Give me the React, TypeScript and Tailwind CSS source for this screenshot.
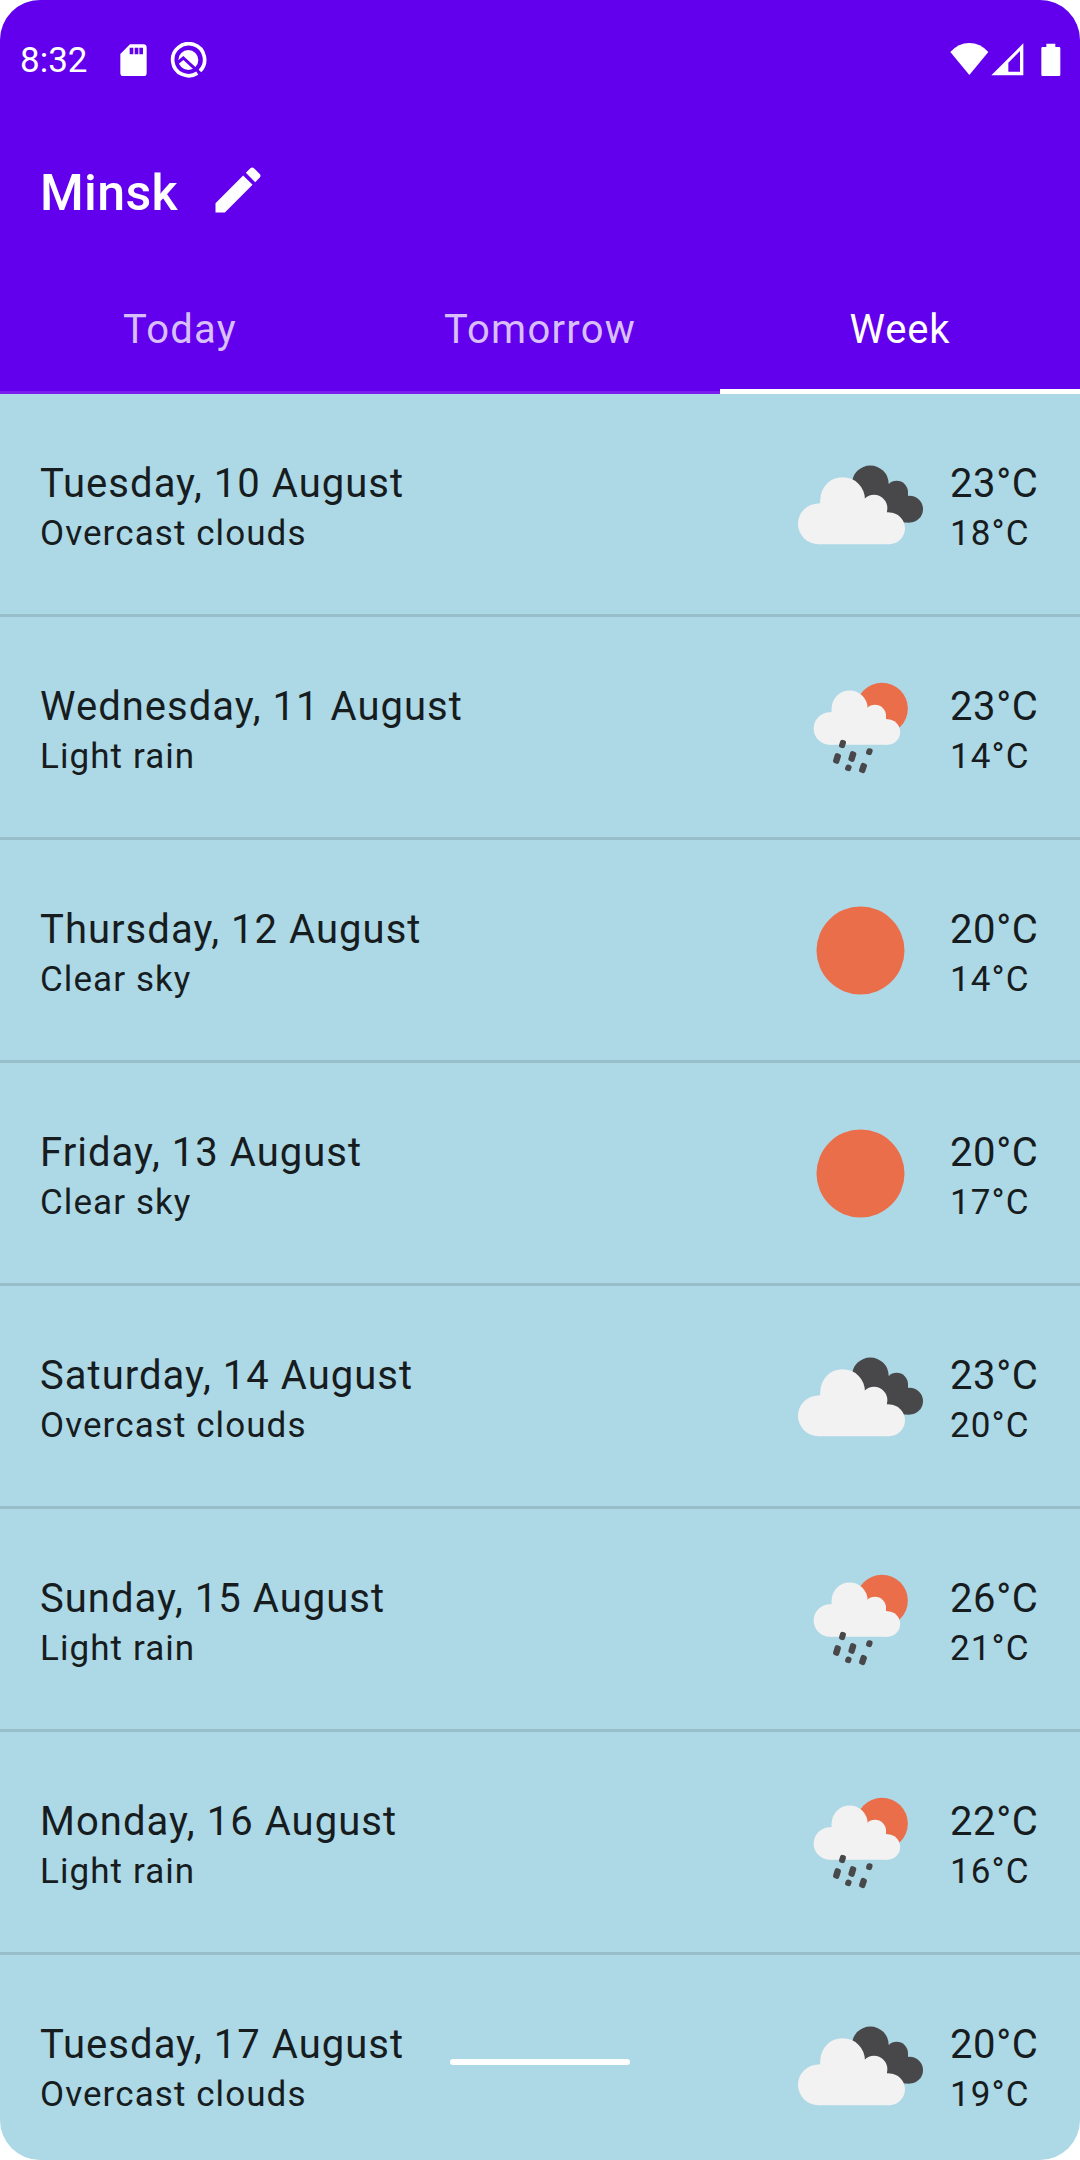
type Weather = 'clouds' | 'rain' | 'sun';

const days: { date: string; text: string; icon: Weather; hi: string; lo: string }[] = [
  { date: 'Tuesday, 10 August', text: 'Overcast clouds', icon: 'clouds', hi: '23°C', lo: '18°C' },
  { date: 'Wednesday, 11 August', text: 'Light rain', icon: 'rain', hi: '23°C', lo: '14°C' },
  { date: 'Thursday, 12 August', text: 'Clear sky', icon: 'sun', hi: '20°C', lo: '14°C' },
  { date: 'Friday, 13 August', text: 'Clear sky', icon: 'sun', hi: '20°C', lo: '17°C' },
  { date: 'Saturday, 14 August', text: 'Overcast clouds', icon: 'clouds', hi: '23°C', lo: '20°C' },
  { date: 'Sunday, 15 August', text: 'Light rain', icon: 'rain', hi: '26°C', lo: '21°C' },
  { date: 'Monday, 16 August', text: 'Light rain', icon: 'rain', hi: '22°C', lo: '16°C' },
  { date: 'Tuesday, 17 August', text: 'Overcast clouds', icon: 'clouds', hi: '20°C', lo: '19°C' },
];

function WeatherIcon({ kind }: { kind: Weather }) {
  if (kind === 'sun') {
    return (
      <svg viewBox="0 0 125 125" className="size-[125px]">
        <circle cx="62.5" cy="62.5" r="44" fill="#EB6E4B" />
      </svg>
    );
  }
  if (kind === 'rain') {
    return (
      <svg viewBox="54 14.5 375 375" className="size-[125px]">
        <circle cx="306" cy="145" r="77.5" fill="#EB6E4B" />
        <g fill="#F2F2F2">
          <circle cx="150" cy="205" r="49" />
          <circle cx="209" cy="145" r="54" />
          <circle cx="285" cy="167" r="33" />
          <circle cx="322" cy="215.5" r="38.5" />
          <path d="M150 156H155V145H262L285 167H318V177H322V254H150Z" />
        </g>
        <g stroke="#48484A" strokeWidth="14" strokeLinejoin="round" fill="#48484A">
          <path d="M187 246l4 1-3 10-4-1zM171 286l5 2-5 16-5-2zM217 280l5 2-5 16-5-2zM267 271l4 1-2 6-4-1zM204 320l4 1-2 5-4-1zM249 315l5 2-5 15-5-2z" />
        </g>
      </svg>
    );
  }
  return (
    <svg viewBox="54 4.5 375 375" className="size-[125px]">
      <g fill="#48484A">
        <circle cx="271" cy="130" r="55" />
        <circle cx="350" cy="155" r="34" />
        <circle cx="389" cy="206" r="40" />
        <path d="M271 130H326L350 155H384V167L389 206V246H300Z" />
      </g>
      <g fill="#F2F2F2">
        <circle cx="115" cy="250" r="61" />
        <circle cx="188" cy="177" r="67" />
        <circle cx="282" cy="203" r="40" />
        <circle cx="327.5" cy="263.5" r="47.5" />
        <path d="M115 189H121V177H255L282 203H321V216H327.5V311H115Z" />
      </g>
    </svg>
  );
}

function StatusBar() {
  return (
    <div className="flex h-[120px] items-center justify-between pr-[19.4px] pl-5">
      <div className="flex items-center">
        <span className="w-[100px] pt-px text-[35px] leading-[42px]">8:32</span>
        <svg viewBox="360 131 81 98" className="h-[32.7px] w-[27px]">
          <path
            fill="#fff"
            fillRule="evenodd"
            d="M390 132H430Q440 132 440 142V218Q440 228 430 228H371Q361 228 361 218V161ZM389 142V162H400V142ZM404 142V162H415V142ZM418 142V162H429V142Z"
          />
        </svg>
        <svg viewBox="510 126 109 109" className="ml-[23.4px] size-[36.3px]" fill="none">
          <circle cx="565" cy="180" r="30" fill="#fff" />
          <path d="M532 189L550 174L597 217" stroke="#6200EE" strokeWidth="9" />
          <path d="M592 219.5A48 48 0 1 1 600 213" stroke="#fff" strokeWidth="11" />
        </svg>
      </div>
      <svg viewBox="149 125 333 110" className="h-[36.7px] w-[111px]" fill="#fff">
        <path d="M207 224L150 155Q174 128 207 128T264 155Z" />
        <path fillRule="evenodd" d="M273 225L369 129V225ZM324 187V214H359V152Z" />
        <path d="M438 130H465V140H476Q480 140 480 144V223Q480 227 476 227H427Q423 227 423 223V144Q423 140 427 140H438Z" />
      </svg>
    </div>
  );
}

export default function App() {
  return (
    <div className="h-[2160px] w-[1080px] bg-white">
      <div className="relative flex h-full flex-col overflow-hidden rounded-[40px] bg-[#ADD8E6] font-['Roboto',sans-serif]">
        <header className="flex h-[394px] shrink-0 flex-col bg-[#6200EE] text-white">
          <StatusBar />
          <div className="flex h-[140px] items-center pl-10">
            <h1 className="w-[168px] pt-[5px] text-[50px] leading-[60px] font-medium tracking-[0.375px]">Minsk</h1>
            <svg viewBox="0 0 24 24" className="size-[60px]" fill="#fff">
              <path d="M3 17.25V21h3.75L17.81 9.94l-3.75-3.75L3 17.25zM20.71 7.04c.39-.39.39-1.02 0-1.41l-2.34-2.34c-.39-.39-1.02-.39-1.41 0l-1.83 1.83 3.75 3.75 1.83-1.83z" />
            </svg>
          </div>
          <nav className="grid flex-1 grid-cols-3 text-center text-[40px] leading-[50px] tracking-[1.25px]">
            <div className="border-b-3 border-[#7A1EEE] pt-[45px] text-[#D8BFFB]">Today</div>
            <div className="border-b-3 border-[#7A1EEE] pt-[45px] text-[#D8BFFB]">Tomorrow</div>
            <div className="border-b-5 border-white pt-[45px] tracking-[0.8px]">Week</div>
          </nav>
        </header>
        <main className="text-[#171C1E]">
          {days.map((d) => (
            <div key={d.date} className="flex h-[223px] border-b-3 border-[#98BECA] pl-10">
              <div className="flex-1 pt-[65px]">
                <div className="text-[40px] leading-[50px] tracking-[1.03px]">{d.date}</div>
                <div className="text-[35px] leading-[50px] tracking-[1.08px]">{d.text}</div>
              </div>
              <div className="flex items-center">
                <WeatherIcon kind={d.icon} />
              </div>
              <div className="ml-[27px] w-[130px] pt-[65px]">
                <div className="text-[40px] leading-[50px] tracking-[0.6px]">{d.hi}</div>
                <div className="text-[35px] leading-[50px] tracking-[1.1px]">{d.lo}</div>
              </div>
            </div>
          ))}
        </main>
        <div className="absolute bottom-[95px] left-1/2 h-1.5 w-[180px] -translate-x-1/2 rounded-full bg-white" />
      </div>
    </div>
  );
}
